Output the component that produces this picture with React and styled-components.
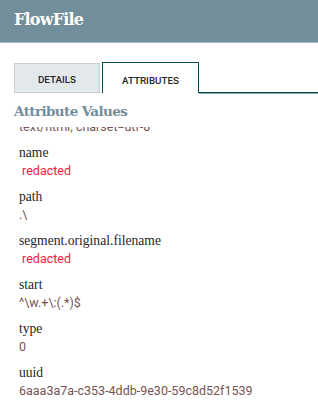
import React, { useEffect, useRef } from "react";
import styled, { createGlobalStyle } from "styled-components";

const Global = createGlobalStyle`
  html, body { margin: 0; padding: 0; background: #fff; }
  body { width: 318px; height: 400px; overflow: hidden; font-family: Roboto, "Liberation Sans", sans-serif; }
`;

const Dialog = styled.div`
  width: 318px;
  height: 400px;
  display: flex;
  flex-direction: column;
  background: #fff;
  overflow: hidden;
`;

const Header = styled.div`
  height: 42px;
  flex: none;
  background: #728e9b;
  border-bottom: 1px solid #a9bac2;
  display: flex;
  align-items: center;
  padding: 0 14px;
`;

const Title = styled.h1`
  margin: -3px 0 0 0;
  font-family: "DejaVu Serif", "Liberation Serif", serif;
  font-weight: bold;
  font-size: 16px;
  letter-spacing: -0.8px;
  color: #fff;
`;

const TabBar = styled.div`
  margin-top: 19px;
  display: flex;
  align-items: flex-end;
  padding-left: 14px;
  height: 31px;
  flex: none;
`;

const Tab = styled.div`
  box-sizing: border-box;
  display: flex;
  align-items: center;
  justify-content: center;
  font-family: Roboto, sans-serif;
  font-weight: 500;
  font-size: 9.8px;
  color: #262626;
  width: ${(p) => p.$w}px;
  height: ${(p) => (p.$active ? 31 : 30)}px;
  background: ${(p) => (p.$active ? "#fff" : "#e3e8eb")};
  border: ${(p) => (p.$active ? "1px solid #004849" : "1px solid #c9d1d5")};
  border-bottom: ${(p) => (p.$active ? "none" : "1px solid #c9d1d5")};
  margin-right: ${(p) => (p.$active ? 0 : 2)}px;
  padding-top: ${(p) => (p.$active ? 4 : 3)}px;
`;

const TabRest = styled.div`
  flex: 1;
  height: 1px;
  background: #004849;
  box-shadow: 0 1px 0 #8fa6ae;
`;

const SectionTitle = styled.h2`
  margin: 7px 0 0 14px;
  font-family: "DejaVu Serif", serif;
  font-weight: bold;
  font-size: 13.5px;
  letter-spacing: -0.6px;
  color: #728e9b;
  height: 22px;
  line-height: 22px;
  flex: none;
`;

const Scroller = styled.div`
  flex: 1;
  min-height: 0;
  overflow: hidden;
  margin-top: 5px;
  padding-left: 19px;
`;

const Row = styled.div`
  display: flex;
  flex-direction: column;
  padding-bottom: 8px;
`;

const Label = styled.div`
  font-family: "Liberation Serif", serif;
  font-size: 13.6px;
  line-height: 18px;
  color: #262626;
`;

const Value = styled.div`
  font-family: Roboto, sans-serif;
  font-size: 12.5px;
  line-height: 18px;
  color: ${(p) => (p.$redacted ? "#ff1a3c" : "#775351")};
  white-space: pre;
`;

const attrs = [
  ["mime.type", "text/html; charset=utf-8"],
  ["name", " redacted", true],
  ["path", ".\\"],
  ["segment.original.filename", " redacted", true],
  ["start", "^\\w.+\\:(.*)$"],
  ["type", "0"],
  ["uuid", "6aaa3a7a-c353-4ddb-9e30-59c8d52f1539"],
];

export default function App() {
  const ref = useRef(null);
  useEffect(() => {
    if (ref.current) ref.current.scrollTop = 27;
  }, []);
  return (
    <Dialog>
      <Global />
      <Header>
        <Title>FlowFile</Title>
      </Header>
      <TabBar>
        <Tab $w={86}>DETAILS</Tab>
        <Tab $w={97} $active>
          ATTRIBUTES
        </Tab>
        <TabRest />
      </TabBar>
      <SectionTitle>Attribute Values</SectionTitle>
      <Scroller ref={ref}>
        {attrs.map(([k, v, r]) => (
          <Row key={k}>
            <Label>{k}</Label>
            <Value $redacted={r}>{v}</Value>
          </Row>
        ))}
      </Scroller>
    </Dialog>
  );
}
